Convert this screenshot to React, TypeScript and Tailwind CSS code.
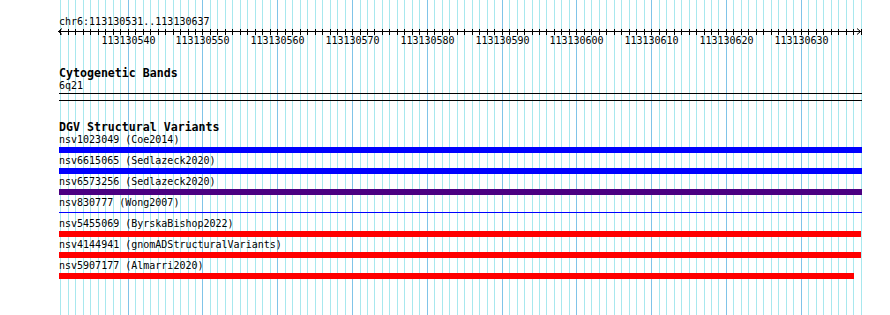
import React from "react";

const BP_LEFT = 60.4;
const BP_WIDTH = 7.478;
const N_LINES = 108;

const gx = (k: number) => Math.round(BP_LEFT + BP_WIDTH * k) + 0.5;

const TRACKS = [
  { label: "nsv1023049 (Coe2014)", bar: "w-[803px] h-[6px] bg-[#0000ff]" },
  { label: "nsv6615065 (Sedlazeck2020)", bar: "w-[803px] h-[6px] bg-[#0000ff]" },
  { label: "nsv6573256 (Sedlazeck2020)", bar: "w-[803px] h-[6px] bg-[#4b0082]" },
  { label: "nsv830777 (Wong2007)", bar: "w-[803px] h-px mt-[2px] mb-[3px] bg-[#0000ff]" },
  { label: "nsv5455069 (ByrskaBishop2022)", bar: "w-[802px] h-[6px] bg-[#ff0000]" },
  { label: "nsv4144941 (gnomADStructuralVariants)", bar: "w-[802px] h-[6px] bg-[#ff0000]" },
  { label: "nsv5907177 (Almarri2020)", bar: "w-[795px] h-[6px] bg-[#ff0000]" },
];

const GuideLines: React.FC = () => (
  <svg className="absolute inset-0" width={890} height={315} shapeRendering="crispEdges">
    {Array.from({ length: N_LINES }).map((_, k) => (
      <line
        key={k}
        x1={gx(k)}
        x2={gx(k)}
        y1={0}
        y2={315}
        stroke={k % 10 === 9 ? "#80c4e8" : "#a8e8ee"}
        strokeWidth={1}
      />
    ))}
  </svg>
);

const Ruler: React.FC = () => {
  const ticks = Array.from({ length: N_LINES }).map((_, k) => k);
  return (
    <svg width={890} height={20} className="block" shapeRendering="crispEdges">
      <line x1={58} x2={861} y1={4.5} y2={4.5} stroke="#000" />
      {ticks.map((k) => (
        <line key={k} x1={gx(k)} x2={gx(k)} y1={1.5} y2={7.5} stroke="#000" />
      ))}
      <polyline points="62,1.5 58.5,4.5 62,7.5" fill="none" stroke="#000" shapeRendering="auto" />
      <polyline points="857,1.5 860.5,4.5 857,7.5" fill="none" stroke="#000" shapeRendering="auto" />
      {ticks
        .filter((k) => k % 10 === 9)
        .map((k) => (
          <text
            key={k}
            x={gx(k)}
            y={17}
            textAnchor="middle"
            fontSize={10}
            fontFamily="'DejaVu Sans Mono', monospace"
            fill="#000"
          >
            {113130531 + k}
          </text>
        ))}
    </svg>
  );
};

export default function App() {
  return (
    <div className="relative w-[890px] h-[315px] overflow-hidden bg-white text-black font-['DejaVu_Sans_Mono',monospace]">
      <GuideLines />
      <div className="relative flex flex-col">
        {/* position header */}
        <div className="pl-[59px] pt-[17px] text-[10px] leading-[10px]">chr6:113130531..113130637</div>
        <Ruler />

        <div className="pl-[59px] flex flex-col">
          {/* Cytogenetic Bands */}
          <div className="mt-[20px] text-[11.6px] leading-[12px] font-bold">Cytogenetic Bands</div>
          <div className="mt-[2px] text-[10px] leading-[10px]">6q21</div>
          <div className="mt-[2px] w-[803px] h-px bg-black"></div>
          <div className="mt-[6px] w-[803px] h-px bg-black"></div>

          {/* DGV Structural Variants */}
          <div className="mt-[20px] text-[11.6px] leading-[12px] font-bold">DGV Structural Variants</div>
          <div className="mt-[2px] flex flex-col">
            {TRACKS.map((t) => (
              <div key={t.label} className="flex flex-col">
                <div className="text-[10px] leading-[10px] whitespace-pre">{t.label}</div>
                <div className="mt-[2px] mb-[3px] h-[6px]">
                  <div className={t.bar}></div>
                </div>
              </div>
            ))}
          </div>
        </div>
      </div>
    </div>
  );
}
